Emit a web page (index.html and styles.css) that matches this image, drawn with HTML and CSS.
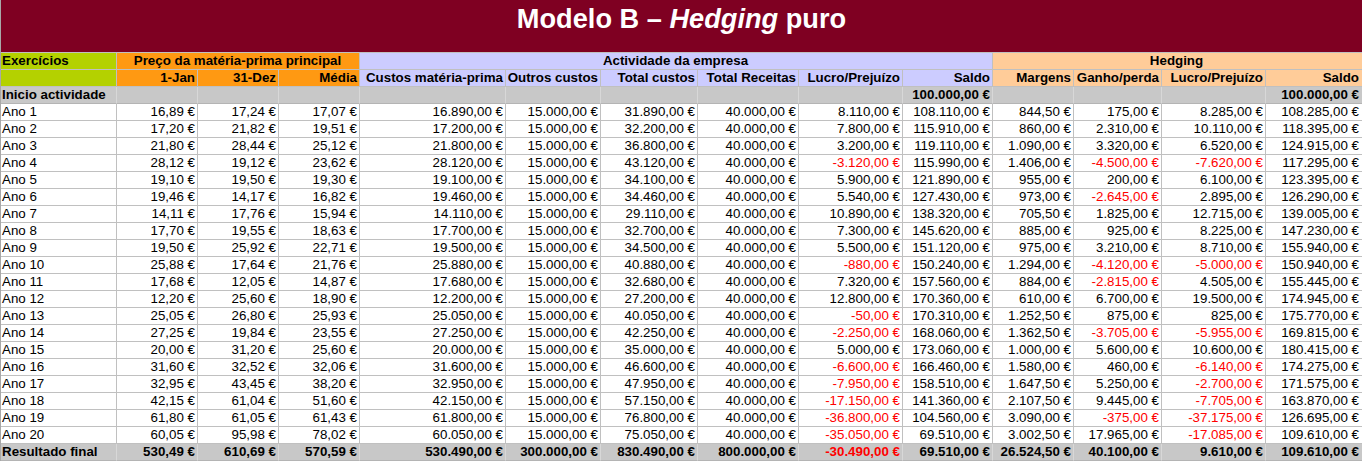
FILE: index.html
```html
<!DOCTYPE html>
<html lang="pt">
<head>
<meta charset="utf-8">
<title>Modelo B – Hedging puro</title>
<link rel="stylesheet" href="styles.css">
</head>
<body>
<div class="sheet">
  <div class="title">Modelo B – <i>Hedging</i> puro</div>

  <div class="row">
    <div class="c green b">Exercícios</div>
    <div class="c orange b ctr span3">Preço da matéria-prima principal</div>
    <div class="c lav b ctr span6">Actividade da empresa</div>
    <div class="c peach b ctr span4 last">Hedging</div>
  </div>

  <div class="row">
    <div class="c green"></div>
    <div class="c orange b r">1-Jan</div>
    <div class="c orange b r">31-Dez</div>
    <div class="c orange b r">Média</div>
    <div class="c lav b r">Custos matéria-prima</div>
    <div class="c lav b r">Outros custos</div>
    <div class="c lav b r">Total custos</div>
    <div class="c lav b r">Total Receitas</div>
    <div class="c lav b r">Lucro/Prejuízo</div>
    <div class="c lav b r">Saldo</div>
    <div class="c peach b r">Margens</div>
    <div class="c peach b r">Ganho/perda</div>
    <div class="c peach b r">Lucro/Prejuízo</div>
    <div class="c peach b r last">Saldo</div>
  </div>

  <div class="row grey b">
    <div class="c">Inicio actividade</div>
    <div class="c"></div><div class="c"></div><div class="c"></div>
    <div class="c"></div><div class="c"></div><div class="c"></div>
    <div class="c"></div><div class="c"></div>
    <div class="c r">100.000,00 €</div>
    <div class="c"></div><div class="c"></div><div class="c"></div>
    <div class="c r last">100.000,00 €</div>
  </div>

  <div class="row data">
    <div class="c">Ano 1</div><div class="c r">16,89 €</div><div class="c r">17,24 €</div><div class="c r">17,07 €</div>
    <div class="c r">16.890,00 €</div><div class="c r">15.000,00 €</div><div class="c r">31.890,00 €</div><div class="c r">40.000,00 €</div>
    <div class="c r">8.110,00 €</div><div class="c r">108.110,00 €</div><div class="c r">844,50 €</div><div class="c r">175,00 €</div>
    <div class="c r">8.285,00 €</div><div class="c r last">108.285,00 €</div>
  </div>
  <div class="row data">
    <div class="c">Ano 2</div><div class="c r">17,20 €</div><div class="c r">21,82 €</div><div class="c r">19,51 €</div>
    <div class="c r">17.200,00 €</div><div class="c r">15.000,00 €</div><div class="c r">32.200,00 €</div><div class="c r">40.000,00 €</div>
    <div class="c r">7.800,00 €</div><div class="c r">115.910,00 €</div><div class="c r">860,00 €</div><div class="c r">2.310,00 €</div>
    <div class="c r">10.110,00 €</div><div class="c r last">118.395,00 €</div>
  </div>
  <div class="row data">
    <div class="c">Ano 3</div><div class="c r">21,80 €</div><div class="c r">28,44 €</div><div class="c r">25,12 €</div>
    <div class="c r">21.800,00 €</div><div class="c r">15.000,00 €</div><div class="c r">36.800,00 €</div><div class="c r">40.000,00 €</div>
    <div class="c r">3.200,00 €</div><div class="c r">119.110,00 €</div><div class="c r">1.090,00 €</div><div class="c r">3.320,00 €</div>
    <div class="c r">6.520,00 €</div><div class="c r last">124.915,00 €</div>
  </div>
  <div class="row data">
    <div class="c">Ano 4</div><div class="c r">28,12 €</div><div class="c r">19,12 €</div><div class="c r">23,62 €</div>
    <div class="c r">28.120,00 €</div><div class="c r">15.000,00 €</div><div class="c r">43.120,00 €</div><div class="c r">40.000,00 €</div>
    <div class="c r neg">-3.120,00 €</div><div class="c r">115.990,00 €</div><div class="c r">1.406,00 €</div><div class="c r neg">-4.500,00 €</div>
    <div class="c r neg">-7.620,00 €</div><div class="c r last">117.295,00 €</div>
  </div>
  <div class="row data">
    <div class="c">Ano 5</div><div class="c r">19,10 €</div><div class="c r">19,50 €</div><div class="c r">19,30 €</div>
    <div class="c r">19.100,00 €</div><div class="c r">15.000,00 €</div><div class="c r">34.100,00 €</div><div class="c r">40.000,00 €</div>
    <div class="c r">5.900,00 €</div><div class="c r">121.890,00 €</div><div class="c r">955,00 €</div><div class="c r">200,00 €</div>
    <div class="c r">6.100,00 €</div><div class="c r last">123.395,00 €</div>
  </div>
  <div class="row data">
    <div class="c">Ano 6</div><div class="c r">19,46 €</div><div class="c r">14,17 €</div><div class="c r">16,82 €</div>
    <div class="c r">19.460,00 €</div><div class="c r">15.000,00 €</div><div class="c r">34.460,00 €</div><div class="c r">40.000,00 €</div>
    <div class="c r">5.540,00 €</div><div class="c r">127.430,00 €</div><div class="c r">973,00 €</div><div class="c r neg">-2.645,00 €</div>
    <div class="c r">2.895,00 €</div><div class="c r last">126.290,00 €</div>
  </div>
  <div class="row data">
    <div class="c">Ano 7</div><div class="c r">14,11 €</div><div class="c r">17,76 €</div><div class="c r">15,94 €</div>
    <div class="c r">14.110,00 €</div><div class="c r">15.000,00 €</div><div class="c r">29.110,00 €</div><div class="c r">40.000,00 €</div>
    <div class="c r">10.890,00 €</div><div class="c r">138.320,00 €</div><div class="c r">705,50 €</div><div class="c r">1.825,00 €</div>
    <div class="c r">12.715,00 €</div><div class="c r last">139.005,00 €</div>
  </div>
  <div class="row data">
    <div class="c">Ano 8</div><div class="c r">17,70 €</div><div class="c r">19,55 €</div><div class="c r">18,63 €</div>
    <div class="c r">17.700,00 €</div><div class="c r">15.000,00 €</div><div class="c r">32.700,00 €</div><div class="c r">40.000,00 €</div>
    <div class="c r">7.300,00 €</div><div class="c r">145.620,00 €</div><div class="c r">885,00 €</div><div class="c r">925,00 €</div>
    <div class="c r">8.225,00 €</div><div class="c r last">147.230,00 €</div>
  </div>
  <div class="row data">
    <div class="c">Ano 9</div><div class="c r">19,50 €</div><div class="c r">25,92 €</div><div class="c r">22,71 €</div>
    <div class="c r">19.500,00 €</div><div class="c r">15.000,00 €</div><div class="c r">34.500,00 €</div><div class="c r">40.000,00 €</div>
    <div class="c r">5.500,00 €</div><div class="c r">151.120,00 €</div><div class="c r">975,00 €</div><div class="c r">3.210,00 €</div>
    <div class="c r">8.710,00 €</div><div class="c r last">155.940,00 €</div>
  </div>
  <div class="row data">
    <div class="c">Ano 10</div><div class="c r">25,88 €</div><div class="c r">17,64 €</div><div class="c r">21,76 €</div>
    <div class="c r">25.880,00 €</div><div class="c r">15.000,00 €</div><div class="c r">40.880,00 €</div><div class="c r">40.000,00 €</div>
    <div class="c r neg">-880,00 €</div><div class="c r">150.240,00 €</div><div class="c r">1.294,00 €</div><div class="c r neg">-4.120,00 €</div>
    <div class="c r neg">-5.000,00 €</div><div class="c r last">150.940,00 €</div>
  </div>
  <div class="row data">
    <div class="c">Ano 11</div><div class="c r">17,68 €</div><div class="c r">12,05 €</div><div class="c r">14,87 €</div>
    <div class="c r">17.680,00 €</div><div class="c r">15.000,00 €</div><div class="c r">32.680,00 €</div><div class="c r">40.000,00 €</div>
    <div class="c r">7.320,00 €</div><div class="c r">157.560,00 €</div><div class="c r">884,00 €</div><div class="c r neg">-2.815,00 €</div>
    <div class="c r">4.505,00 €</div><div class="c r last">155.445,00 €</div>
  </div>
  <div class="row data">
    <div class="c">Ano 12</div><div class="c r">12,20 €</div><div class="c r">25,60 €</div><div class="c r">18,90 €</div>
    <div class="c r">12.200,00 €</div><div class="c r">15.000,00 €</div><div class="c r">27.200,00 €</div><div class="c r">40.000,00 €</div>
    <div class="c r">12.800,00 €</div><div class="c r">170.360,00 €</div><div class="c r">610,00 €</div><div class="c r">6.700,00 €</div>
    <div class="c r">19.500,00 €</div><div class="c r last">174.945,00 €</div>
  </div>
  <div class="row data">
    <div class="c">Ano 13</div><div class="c r">25,05 €</div><div class="c r">26,80 €</div><div class="c r">25,93 €</div>
    <div class="c r">25.050,00 €</div><div class="c r">15.000,00 €</div><div class="c r">40.050,00 €</div><div class="c r">40.000,00 €</div>
    <div class="c r neg">-50,00 €</div><div class="c r">170.310,00 €</div><div class="c r">1.252,50 €</div><div class="c r">875,00 €</div>
    <div class="c r">825,00 €</div><div class="c r last">175.770,00 €</div>
  </div>
  <div class="row data">
    <div class="c">Ano 14</div><div class="c r">27,25 €</div><div class="c r">19,84 €</div><div class="c r">23,55 €</div>
    <div class="c r">27.250,00 €</div><div class="c r">15.000,00 €</div><div class="c r">42.250,00 €</div><div class="c r">40.000,00 €</div>
    <div class="c r neg">-2.250,00 €</div><div class="c r">168.060,00 €</div><div class="c r">1.362,50 €</div><div class="c r neg">-3.705,00 €</div>
    <div class="c r neg">-5.955,00 €</div><div class="c r last">169.815,00 €</div>
  </div>
  <div class="row data">
    <div class="c">Ano 15</div><div class="c r">20,00 €</div><div class="c r">31,20 €</div><div class="c r">25,60 €</div>
    <div class="c r">20.000,00 €</div><div class="c r">15.000,00 €</div><div class="c r">35.000,00 €</div><div class="c r">40.000,00 €</div>
    <div class="c r">5.000,00 €</div><div class="c r">173.060,00 €</div><div class="c r">1.000,00 €</div><div class="c r">5.600,00 €</div>
    <div class="c r">10.600,00 €</div><div class="c r last">180.415,00 €</div>
  </div>
  <div class="row data">
    <div class="c">Ano 16</div><div class="c r">31,60 €</div><div class="c r">32,52 €</div><div class="c r">32,06 €</div>
    <div class="c r">31.600,00 €</div><div class="c r">15.000,00 €</div><div class="c r">46.600,00 €</div><div class="c r">40.000,00 €</div>
    <div class="c r neg">-6.600,00 €</div><div class="c r">166.460,00 €</div><div class="c r">1.580,00 €</div><div class="c r">460,00 €</div>
    <div class="c r neg">-6.140,00 €</div><div class="c r last">174.275,00 €</div>
  </div>
  <div class="row data">
    <div class="c">Ano 17</div><div class="c r">32,95 €</div><div class="c r">43,45 €</div><div class="c r">38,20 €</div>
    <div class="c r">32.950,00 €</div><div class="c r">15.000,00 €</div><div class="c r">47.950,00 €</div><div class="c r">40.000,00 €</div>
    <div class="c r neg">-7.950,00 €</div><div class="c r">158.510,00 €</div><div class="c r">1.647,50 €</div><div class="c r">5.250,00 €</div>
    <div class="c r neg">-2.700,00 €</div><div class="c r last">171.575,00 €</div>
  </div>
  <div class="row data">
    <div class="c">Ano 18</div><div class="c r">42,15 €</div><div class="c r">61,04 €</div><div class="c r">51,60 €</div>
    <div class="c r">42.150,00 €</div><div class="c r">15.000,00 €</div><div class="c r">57.150,00 €</div><div class="c r">40.000,00 €</div>
    <div class="c r neg">-17.150,00 €</div><div class="c r">141.360,00 €</div><div class="c r">2.107,50 €</div><div class="c r">9.445,00 €</div>
    <div class="c r neg">-7.705,00 €</div><div class="c r last">163.870,00 €</div>
  </div>
  <div class="row data">
    <div class="c">Ano 19</div><div class="c r">61,80 €</div><div class="c r">61,05 €</div><div class="c r">61,43 €</div>
    <div class="c r">61.800,00 €</div><div class="c r">15.000,00 €</div><div class="c r">76.800,00 €</div><div class="c r">40.000,00 €</div>
    <div class="c r neg">-36.800,00 €</div><div class="c r">104.560,00 €</div><div class="c r">3.090,00 €</div><div class="c r neg">-375,00 €</div>
    <div class="c r neg">-37.175,00 €</div><div class="c r last">126.695,00 €</div>
  </div>
  <div class="row data">
    <div class="c">Ano 20</div><div class="c r">60,05 €</div><div class="c r">95,98 €</div><div class="c r">78,02 €</div>
    <div class="c r">60.050,00 €</div><div class="c r">15.000,00 €</div><div class="c r">75.050,00 €</div><div class="c r">40.000,00 €</div>
    <div class="c r neg">-35.050,00 €</div><div class="c r">69.510,00 €</div><div class="c r">3.002,50 €</div><div class="c r">17.965,00 €</div>
    <div class="c r neg">-17.085,00 €</div><div class="c r last">109.610,00 €</div>
  </div>

  <div class="row grey b">
    <div class="c">Resultado final</div><div class="c r">530,49 €</div><div class="c r">610,69 €</div><div class="c r">570,59 €</div>
    <div class="c r">530.490,00 €</div><div class="c r">300.000,00 €</div><div class="c r">830.490,00 €</div><div class="c r">800.000,00 €</div>
    <div class="c r neg">-30.490,00 €</div><div class="c r">69.510,00 €</div><div class="c r">26.524,50 €</div><div class="c r">40.100,00 €</div>
    <div class="c r">9.610,00 €</div><div class="c r last">109.610,00 €</div>
  </div>
</div>
</body>
</html>
```

FILE: styles.css
```css
html, body {
  margin: 0;
  padding: 0;
  background: #ffffff;
  overflow: hidden;
}

.sheet {
  width: 1362px;
  box-sizing: border-box;
  border-left: 1px solid #a8a8a8;
  display: grid;
  grid-template-columns: 116px 81px 81px 81px 146px 95px 97px 101px 104px 90px 81px 88px 104px 1fr;
  grid-template-rows: 53px;
  grid-auto-rows: 17px;
  font-family: "Liberation Sans", Arial, sans-serif;
  font-size: 13.33px;
  line-height: 16px;
  color: #000000;
}

.title {
  grid-column: 1 / -1;
  height: 53px;
  box-sizing: border-box;
  padding-top: 3px;
  background: #7f0022;
  border-bottom: 1px solid #c0c0c0;
  color: #ffffff;
  font-size: 27.2px;
  font-weight: bold;
  line-height: 32px;
  text-align: center;
}

.row {
  display: contents;
}

.c {
  box-sizing: border-box;
  height: 17px;
  padding: 0 2px 0 1px;
  border-right: 1px solid #c0c0c0;
  border-bottom: 1px solid #c0c0c0;
  white-space: nowrap;
  overflow: hidden;
}

.c.last {
  border-right: none;
  padding-right: 3px;
}

.r { text-align: right; }
.ctr { text-align: center; }
.b, .b .c { font-weight: bold; }

.span3 { grid-column: span 3; }
.span4 { grid-column: span 4; }
.span6 { grid-column: span 6; }

.green { background: #b4d100; }
.orange { background: #ff9912; }
.lav { background: #ccccff; }
.peach { background: #ffcc99; }

.grey .c {
  background: #c8c8c8;
  border-right-color: #d8d8d8;
  border-bottom-color: #b4b4b4;
}

.neg { color: #ff0000; }
```
